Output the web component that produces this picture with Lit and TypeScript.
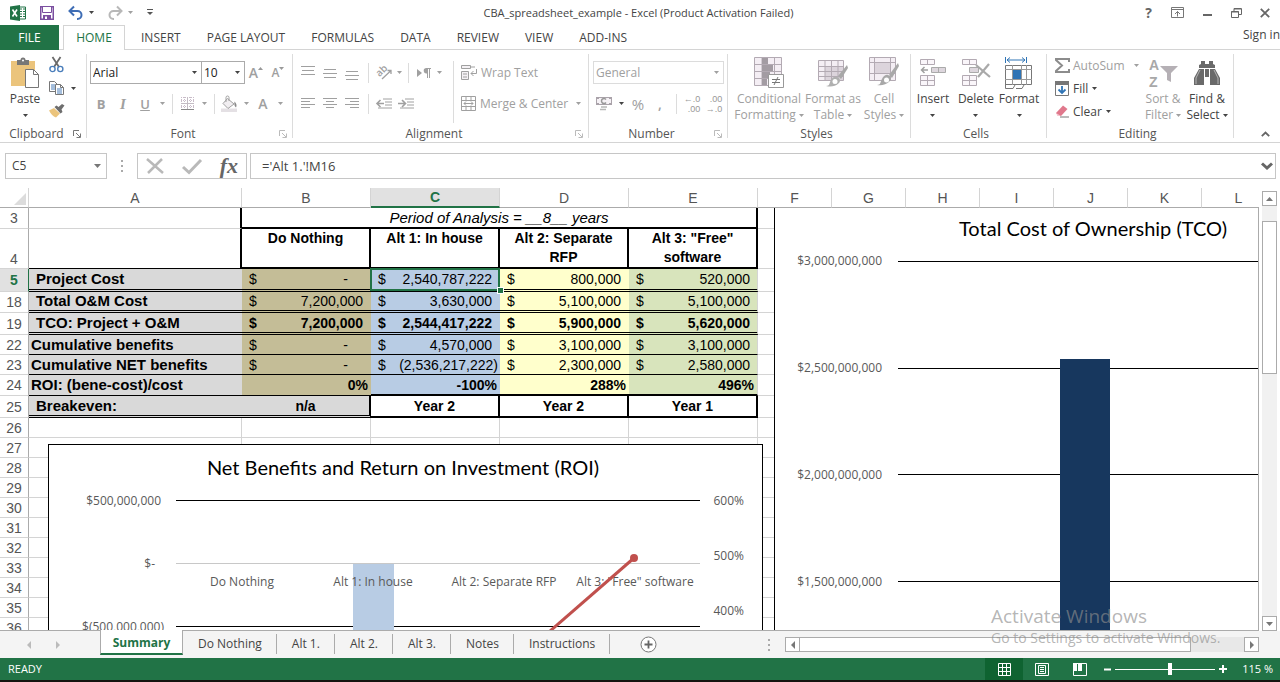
import { LitElement, html, svg, css, nothing, TemplateResult } from "lit";
import { customElement } from "lit/decorators.js";
import { classMap } from "lit/directives/class-map.js";

const icon = (w: number, h: number, body: unknown) =>
  html`<svg class="icon" width=${w} height=${h} viewBox="0 0 ${w} ${h}" aria-hidden="true">${body}</svg>`;

const caret = () => icon(5, 3, svg`<path d="M0 0h5L2.500 3z" fill="currentColor"/>`);

const lines = (rows: Array<[number, number, number]>) =>
  icon(14, 14, svg`${rows.map(([x, y, w]) => svg`<rect x=${x} y=${y} width=${w} height="1" fill="#a0a0a0"/>`)}`);

const launcher = (dim: boolean) =>
  icon(8, 8, svg`<path d="M.5 6V.5H6M3 3l4 4M7.500 3.500v4h-4" fill="none" stroke=${dim ? "#bbb" : "#777"}/>`);

const icons = {
  excel: icon(16, 16, svg`<path d="M9 2h6.500v12H9z" fill="#fff" stroke="#217346"/><path d="M10 4h2m1 0h2M10 6.500h2m1 0h2M10 9h2m1 0h2M10 11.500h2m1 0h2" stroke="#217346"/><path d="M0 1.500 10 0v16L0 14.500z" fill="#217346"/><path d="m2.500 4.500 4.500 7M7 4.500l-4.500 7" stroke="#fff" stroke-width="1.600"/>`),
  save: icon(14, 14, svg`<path d="M.75.75h12.500v12.500H.75z" fill="#fff" stroke="#7b4fa0" stroke-width="1.500"/><path d="M2.500 1v5.500h9V1" fill="#fff" stroke="#7b4fa0"/><path d="M3 9h8v4.500H3z" fill="#7b4fa0"/><path d="M5 10.500h2V13H5z" fill="#fff"/>`),
  undo: icon(16, 14, svg`<path d="M2 5h7.500a4 4 0 0 1 0 8H9" fill="none" stroke="#3e6db5" stroke-width="2"/><path d="M6 .5 1.500 5 6 9.500" fill="none" stroke="#3e6db5" stroke-width="2"/>`),
  redo: icon(16, 14, svg`<path d="M14 5H6.500a4 4 0 0 0 0 8H7" fill="none" stroke="#b8b8b8" stroke-width="2"/><path d="m10 .5 4.500 4.500L10 9.500" fill="none" stroke="#b8b8b8" stroke-width="2"/>`),
  customise: icon(6, 7, svg`<path d="M0 .5h6" stroke="#555"/><path d="M0 3h6L3 6z" fill="#555"/>`),
  help: html`<b class="help">?</b>`,
  ribbonOptions: icon(13, 11, svg`<path d="M.5.5h12v10H.5zM0 2.500h13M6.500 9.500v-5M4 7l2.500-2.500L9 7" fill="none" stroke="#777"/>`),
  minimize: icon(9, 10, svg`<path d="M0 7h9" stroke="#666" stroke-width="2"/>`),
  restore: icon(11, 10, svg`<path d="M.5 3.500h7v6h-7zM0 4h8M3 3V.5h7.500v6H8M3 1h7" fill="none" stroke="#666"/>`),
  close: icon(10, 10, svg`<path d="m.8.8 8.400 8.400M9.200.8.8 9.200" stroke="#666" stroke-width="1.800"/>`),
  paste: icon(28, 32, svg`<path d="M0 4h24v25H0z" fill="#ebc47c"/><path d="M6 3h3.500a2.500 2.500 0 0 1 5 0H18v5H6z" fill="#777"/><circle cx="12" cy="3.500" r="1" fill="#fff"/><path d="M14.500 12.500h8l5 5v13h-13z" fill="#fff" stroke="#777"/><path d="M22.500 12.500v5h5" fill="none" stroke="#777"/>`),
  cut: icon(15, 16, svg`<path d="M3.500 0 10 10M11.500 0 5 10" stroke="#6a6a6a" stroke-width="1.800"/><circle cx="3.500" cy="12" r="2.600" fill="none" stroke="#4a7ebb" stroke-width="1.400"/><circle cx="11.300" cy="12" r="2.600" fill="none" stroke="#4a7ebb" stroke-width="1.400"/>`),
  copy: icon(15, 14, svg`<path d="M.5.5h5l3 3v7h-8z" fill="#fff" stroke="#777"/><path d="M2 4h4M2 6h4M2 8h4" stroke="#4a7ebb"/><path d="M6.500 3.500h5l3 3v7h-8z" fill="#fff" stroke="#777"/><path d="M11.500 3.500v3h3" fill="none" stroke="#777"/><path d="M8 8h5M8 10h5M8 12h5" stroke="#4a7ebb"/>`),
  painter: icon(16, 14, svg`<path d="M0 6.500 5 4l6 5.500-4 4C4 12.500 2 10 0 6.500z" fill="#ebc47c"/><path d="m5.500 3 2-1.500 2 1.500L13 0l2.500 1.500-3 4 1 2.500-2 1.500z" fill="#6e6e6e"/>`),
  grow: html`<span class="glyph big">A</span>${icon(5, 12, svg`<path d="M0 3h5L2.500 0z" fill="#999"/>`)}`,
  shrink: html`<span class="glyph small">A</span>${icon(5, 12, svg`<path d="M0 0h5L2.500 3z" fill="#999"/>`)}`,
  borders: icon(13, 13, svg`<path d="M.5 0v12M3.500 0v12M6.500 0v12M9.500 0v12M12.500 0v12M0 .5h13M0 3.500h13M0 6.500h13M0 9.500h13" stroke="#c9bcc9" stroke-dasharray="1 1"/><path d="M0 6.500h13M6.500 0v12" stroke="#c4bcc4"/><path d="M0 12.500h13" stroke="#888"/>`),
  bucket: icon(17, 16, svg`<path d="M0 12.500h16V16H0z" fill="#e4e0e4"/><path d="m6.500 2.500 6.500 5.500-6 4.500-5-5z" fill="#f1eef1" stroke="#a0a0a0"/><path d="M5 6V1.500a1.500 1.500 0 0 1 3 0V5" fill="none" stroke="#a0a0a0"/><path d="M13.500 5.500c2 2 2.500 4 1.500 6-1.500-1-2-3-1.500-6z" fill="#8a8a8a"/>`),
  top: lines([[0, 0, 14], [1, 4, 12], [0, 8, 14]]),
  middle: lines([[1, 3, 12], [0, 7, 14], [1, 11, 12]]),
  bottom: lines([[1, 5, 12], [0, 9, 14], [1, 13, 12]]),
  left: lines([[0, 1, 14], [0, 4, 9], [0, 7, 14], [0, 10, 9]]),
  center: lines([[0, 1, 14], [3, 4, 8], [0, 7, 14], [3, 10, 8]]),
  right: lines([[0, 1, 14], [5, 4, 9], [0, 7, 14], [5, 10, 9]]),
  orientation: icon(17, 15, svg`<text x="1" y="10" transform="rotate(-45 5 8)" font-size="10" font-family="Open Sans" font-weight="600" fill="#a0a0a0">ab</text><path d="M6 14 15 5.500M11.500 5.500H15V9" fill="none" stroke="#a0a0a0" stroke-width="1.300"/>`),
  direction: icon(14, 10, svg`<path d="m0 1 5 4-5 4z" fill="#a0a0a0"/><path d="M9 5V0h5v1h-1v9h-1V1h-1v9h-1V5.500A2.500 2.500 0 0 1 9 0" fill="#a0a0a0"/>`),
  outdent: icon(16, 12, svg`<path d="M7 1h9M9 4h7M9 7h7M2 10h14" stroke="#a0a0a0"/><path d="M1 5.500h7M4.500 2 1 5.500 4.500 9" fill="none" stroke="#a0a0a0" stroke-width="1.600"/>`),
  indent: icon(16, 12, svg`<path d="M7 1h9M9 4h7M9 7h7M2 10h14" stroke="#a0a0a0"/><path d="M0 5.500h7M4 2l3.500 3.500L4 9" fill="none" stroke="#a0a0a0" stroke-width="1.600"/>`),
  wrap: icon(16, 15, svg`<path d="M.5.5h9v3h-9zM.5 6.500h7v8h-7z" fill="#f4f1f4" stroke="#a0a0a0"/><path d="M2 9h4M2 12h4M10 2h4M15.500 4v4.500H10M12.500 6 10 8.500l2.500 2.500" fill="none" stroke="#a0a0a0"/>`),
  merge: icon(15, 15, svg`<path d="M.5.5h14v14H.5zM0 4.500h15M0 10.500h15M5 .5v4M10 .5v4M5 10.500v4M10 10.500v4M3 7.500h9M5 5.500l-2 2 2 2M10 5.500l2 2-2 2" fill="none" stroke="#a0a0a0"/>`),
  currency: icon(17, 15, svg`<path d="M.5 1.500h15v7H.5z" fill="#f6f2f6" stroke="#aaa3aa"/><path d="M0 1h3v2H0zM13 1h3v2h-3zM0 7h3v2H0zM13 7h3v2h-3z" fill="#aaa3aa"/><path d="M10 3.500a2.500 2.500 0 1 0 0 3" fill="none" stroke="#999" stroke-width="1.500"/><path d="M5 11h6M4 13.500h6" stroke="#b8b8b8" stroke-width="1.500"/>`),
  decInc: html`<span class="decimals"><span>←.0</span><span>.00</span></span>`,
  decDec: html`<span class="decimals"><span>.00</span><span>→.0</span></span>`,
  conditional: icon(30, 31, svg`<path d="M.5.5h27v28H.5z" fill="#f4eef4" stroke="#b3aab3"/><path d="M0 7.500h28M0 14.500h28M0 21.500h28M8 0v29M20.500 0v29" stroke="#b3aab3"/><path d="M8 1h6v6H8zM8 8h11v6H8zM8 15h8v6H8zM8 22h5v6H8z" fill="#a39ca3"/><path d="M14.500 17.500h15v13h-15z" fill="#fff" stroke="#999"/><path d="M18 22.500h8M18 25.500h8M24 20l-4 8" stroke="#777"/>`),
  formatTable: icon(30, 31, svg`<path d="M.5 3.500h25v20H.5z" fill="#f4eef4" stroke="#b3aab3"/><path d="M7 9h18v14H7z" fill="#dcd4dc"/><path d="M0 9.500h26M0 14.500h26M0 19.500h26M7 3v20M13.500 3v20M20 3v20" stroke="#b3aab3"/><path d="m29 8-9 11 3 3 7-11z" fill="#a8a8a8"/><path d="M19 20c3 1 4 4 2 6-4 4-9 4-13 3 4 0 3-3 5-6 1-2 3-4 6-3z" fill="#b0b0b0"/><circle cx="17" cy="24.500" r="2.500" fill="#fff"/>`),
  cellStyles: icon(30, 31, svg`<path d="M.5.5h26v23H.5z" fill="#f4eef4" stroke="#b3aab3"/><path d="M6 6h15v10H6z" fill="#dcd4dc"/><path d="M0 5.500h27M0 16.500h27M5.500 0v24M21.500 0v24" stroke="#b3aab3"/><path d="m29 6-9 12 3 3 7-12z" fill="#a8a8a8"/><path d="M19 18c3 1 4 4 2 6-4 4-9 5-13 4 4 0 3-3 5-6 1-2 3-5 6-4z" fill="#a8a8a8"/><circle cx="17.500" cy="23" r="2.500" fill="#fff"/>`),
  insert: icon(28, 29, svg`<path d="M1.500 1.500h14v5h-14zM8.500 1v6M1.500 17.500h14v10h-14zM8.500 17v11M1 22.500h15" fill="#faf6fa" stroke="#b3aab3"/><path d="M12.500 9.500h14v5h-14zM19.500 9v6" fill="#ddd6dd" stroke="#aaa"/><path d="M3 12h6M5.500 9 2.500 12l3 3" fill="none" stroke="#a0a0a0" stroke-width="1.500"/>`),
  remove: icon(30, 29, svg`<path d="M1.500 1.500h14v5h-14zM8.500 1v6M1.500 17.500h14v10h-14zM8.500 17v11M1 22.500h15" fill="#faf6fa" stroke="#b3aab3"/><path d="M8.500 9.500h9v5h-9z" fill="#ddd6dd" stroke="#aaa"/><path d="m15 7 14 12M28 6 17 19" stroke="#a9a9a9" stroke-width="2.200"/>`),
  format: icon(30, 32, svg`<path d="M1.500 0v6M22.500 0v6M3 3h18M6 .5 3 3l3 2.500M18 .5 21 3l-3 2.500" fill="none" stroke="#2f74b5"/><path d="M1.500 8.500h26v19h-26z" fill="#fff" stroke="#777"/><path d="M8.500 8v20M17.500 8v20M22.500 8v20M1 12.500h27M1 22.500h27" fill="none" stroke="#999"/><path d="M9 13h8v9H9z" fill="#2f74b5"/><path d="M1.500 27v4.500H9l2-3.500M12 31.500h6l2-3.500" fill="none" stroke="#777"/>`),
  sigma: icon(14, 15, svg`<path d="M14 4V1H1v1l6 5.500-6 5.500v1h13v-3" fill="none" stroke="#8c8c8c" stroke-width="2"/>`),
  fill: icon(14, 15, svg`<path d="M.5.5h13v14H.5z" fill="#fff" stroke="#777"/><path d="M0 0h14v4H0z" fill="#777"/><path d="M7 5v7M3.500 8.500 7 12l3.500-3.500" fill="none" stroke="#2f74b5" stroke-width="1.800"/>`),
  clear: icon(14, 13, svg`<path d="M1 8 8 .5 12.500 4 6 11H3z" fill="#e0788c"/><path d="m1 8 5 3H3z" fill="#f7c8d0"/><path d="M5 12h9" stroke="#777"/>`),
  sort: icon(30, 32, svg`<g font-family="Liberation Sans" font-size="14" font-weight="700" fill="#a8a8a8"><text x="1" y="13">A</text><text x="1" y="30">Z</text></g><path d="M12 9h18l-7 7v9l-4-2v-7z" fill="#b5b0b5"/>`),
  find: icon(28, 26, svg`<path d="M8 1h4v3h4V1h4v3l2 1v3H6V5l2-1z" fill="#6a6a6a"/><path d="M6 9 1 18v7h10V9zM22 9l5 9v7H17V9z" fill="#6a6a6a"/><path d="M12 9h4v8h-4z" fill="#6a6a6a"/><path d="m7 10-4 8v6M21 10l4 8v6" fill="none" stroke="#b5b5b5"/>`),
  collapse: icon(9, 6, svg`<path d="m.8 5.200 3.700-3.700 3.700 3.700" fill="none" stroke="#666" stroke-width="1.800"/>`),
  cancel: icon(18, 16, svg`<path d="m1 1 16 14M16 1 2 15" stroke="#b9b9b9" stroke-width="2.500"/>`),
  enter: icon(20, 15, svg`<path d="m1 8 6 5.500L19 1" fill="none" stroke="#b9b9b9" stroke-width="3"/>`),
  expand: icon(12, 8, svg`<path d="m1 1.500 5 4.500 5-4.500" fill="none" stroke="#666" stroke-width="3"/>`),
  corner: icon(12, 12, svg`<path d="M12 0v12H0z" fill="#dcdcdc"/>`),
  up: icon(7, 4, svg`<path d="M0 4h7L3.500 0z" fill="#777"/>`),
  down: icon(7, 4, svg`<path d="M0 0h7L3.500 4z" fill="#777"/>`),
  prev: icon(4, 8, svg`<path d="M4 0v8L0 4z" fill="currentColor"/>`),
  next: icon(4, 8, svg`<path d="M0 0v8l4-4z" fill="currentColor"/>`),
  add: icon(17, 17, svg`<circle cx="8.500" cy="8.500" r="7.500" fill="#fff" stroke="#777"/><path d="M8.500 4.500v8M4.500 8.500h8" stroke="#666" stroke-width="1.800"/>`),
  dots: icon(2, 12, svg`<path d="M0 1h2M0 6h2M0 11h2" stroke="#aaa" stroke-width="2"/>`),
  normalView: icon(13, 13, svg`<path d="M.5.5h12v12H.5zM4.500 0v13M8.500 0v13M0 4.500h13M0 8.500h13" fill="none" stroke="#fff"/>`),
  layoutView: icon(14, 13, svg`<path d="M.5.5h13v12H.5zM3.500 2.500h7v8h-7zM5 4.500h4M5 6.500h4M5 8.500h4" fill="none" stroke="#fff"/>`),
  breakView: icon(14, 13, svg`<path d="M.5.5h13v12H.5z" fill="none" stroke="#fff"/><path d="M0 0h4v8H0zM5 0h4v8H5z" fill="#fff"/>`),
};

interface Row {
  n: string;
  kind: string;
  label?: string;
  indent?: boolean;
  values?: string[];
}

const ROWS: Row[] = [
  { n: "5", kind: "money double r5", label: "Project Cost", indent: true, values: ["-", "2,540,787,222", "800,000", "520,000"] },
  { n: "18", kind: "money double r18", label: "Total O&M Cost", indent: true, values: ["7,200,000", "3,630,000", "5,100,000", "5,100,000"] },
  { n: "19", kind: "money double r19 strong", label: "TCO: Project + O&M", indent: true, values: ["7,200,000", "2,544,417,222", "5,900,000", "5,620,000"] },
  { n: "22", kind: "money single", label: "Cumulative benefits", values: ["-", "4,570,000", "3,100,000", "3,100,000"] },
  { n: "23", kind: "money single", label: "Cumulative NET benefits", values: ["-", "(2,536,217,222)", "2,300,000", "2,580,000"] },
  { n: "24", kind: "percent single r24 strong", label: "ROI: (bene-cost)/cost", values: ["0%", "-100%", "288%", "496%"] },
  { n: "25", kind: "break strong", label: "Breakeven:", indent: true, values: ["n/a", "Year 2", "Year 2", "Year 1"] },
  ...["26", "27", "28", "29", "30", "31", "32", "33", "34", "35", "36"].map((n) => ({ n, kind: "plain" })),
];

const COLS = ["A", "B", "C", "D", "E", "F", "G", "H", "I", "J", "K", "L"];
const FILLS = ["tan", "blue", "yellow", "green"];

@customElement("app-root")
export class AppRoot extends LitElement {
  static styles = css`
    :host { display: flex; flex-direction: column; height: 100vh; overflow: hidden; background: #fff; color: #444;
      font: 12px/16px "Open Sans", "Noto Sans", sans-serif; }
    * { box-sizing: border-box; }
    button, select, input { font: inherit; color: inherit; background: none; border: 0; padding: 0; margin: 0; border-radius: 0; }
    button { display: inline-flex; align-items: center; justify-content: center; white-space: nowrap; }
    .icon { display: block; flex: none; overflow: visible; }
    .dim { color: #a0a0a0; }
    .help { font-size: 14px; line-height: 20px; color: #666; }

    .titlebar { display: flex; height: 25px; align-items: center; justify-content: space-between; flex: none; }
    .quick { display: flex; align-items: center; width: 153px; padding-left: 10px; justify-content: space-between; }
    .quick .pair { display: flex; align-items: center; gap: 5px; }
    .title { margin: 0; padding-right: 10px; font-size: 11px; font-weight: 400; flex: 1; text-align: center; }
    .window { display: flex; align-items: center; width: 146px; }
    .window button { flex: 1; height: 22px; }

    .tabs { display: flex; height: 25px; flex: none; border-bottom: 1px solid #d4d4d4; }
    .tabs button { padding: 0 13px; height: 25px; white-space: nowrap; }
    .tabs .file { width: 59px; background: #217346; color: #fff; }
    .tabs .home { width: 62px; margin: 0 3px 0 4px; color: #217346; background: #fff; border: 1px solid #d4d4d4; border-bottom: 0; }
    .tabs .signin { margin-left: auto; padding: 0; height: 20px; }

    .ribbon { display: flex; height: 93px; flex: none; border-bottom: 1px solid #d4d4d4; padding: 4px 0; }
    .group { display: flex; flex-direction: column; flex: none; border-right: 1px solid #dcdcdc; }
    .body { flex: 1; display: flex; }
    .caption { display: flex; height: 16px; align-items: center; padding-right: 5px; margin-bottom: -4px; color: #555; }
    .caption span { flex: 1; text-align: center; }
    .clipboard { width: 87px; }
    .font { width: 206px; }
    .alignment { width: 296px; }
    .number { width: 139px; }
    .styles { width: 183px; }
    .cells { width: 136px; }
    .editing { width: 187px; }
    .stack { flex-direction: column; padding: 7px 0 0 3px; gap: 8px; }
    .line { display: flex; align-items: center; height: 23px; }
    .b22 { width: 22px; height: 22px; }
    .b12 { width: 12px; height: 22px; }
    .b8 { width: 8px; height: 22px; }
    .sep { width: 10px; height: 20px; display: flex; justify-content: center; }
    .font .sep { width: 8px; }
    .sep::before { content: ""; width: 1px; background: #dcdcdc; }
    .glyph { color: #a0a0a0; font-weight: 600; }
    .glyph.big { font-size: 14px; }
    .glyph.small { font-size: 12px; }
    .glyph.bd { font-weight: 700; font-size: 13px; }
    .glyph.it { font-family: "Liberation Serif", serif; font-style: italic; font-size: 15px; }
    .glyph.un { text-decoration: underline; font-size: 13px; }
    .glyph.pct { font-size: 15px; font-weight: 400; }
    .decimals { display: flex; flex-direction: column; align-items: flex-end; font: 9px/10px "Liberation Sans", Arial, sans-serif; color: #999; }
    .combo { display: grid; height: 23px; border: 1px solid #ababab; align-items: center; }
    .combo select { grid-area: 1 / 1; appearance: none; width: 100%; height: 21px; padding-left: 2px; color: #222; }
    .combo .icon { grid-area: 1 / 1; justify-self: end; margin-right: 4px; pointer-events: none; }
    .combo + .combo { margin-left: -1px; }
    .combo.off { border-color: #dcdcdc; }
    .combo.off select { color: #a0a0a0; }
    .family { width: 112px; }
    .size { width: 44px; }
    .format { width: 131px; }
    .number .stack { padding-left: 4px; }
    .paste { width: 42px; margin: 0 3px 0 4px; }
    .tall { display: flex; flex-direction: column; align-items: center; justify-content: flex-start; }
    .tall .pic { height: 37px; display: flex; align-items: center; justify-content: center; }
    .tall .txt { line-height: 16px; text-align: center; display: flex; flex-direction: column; align-items: center; }
    .tall .txt .row { display: flex; align-items: center; gap: 3px; height: 16px; }
    .mini { display: flex; flex-direction: column; gap: 1px; }
    .mini button { height: 22px; justify-content: flex-start; gap: 7px; }
    .side { flex: 1; border-left: 1px solid #dcdcdc; height: 62px; display: flex; flex-direction: column; gap: 8px; padding: 0 0 0 7px; }
    .side button { height: 23px; gap: 4px; align-self: flex-start; }
    .side .merge { gap: 4px; }
    .side .after { padding-left: 4px; }
    .aligns { padding: 7px 0 0 4px; }
    .aligns .left { width: 156px; display: flex; flex-direction: column; gap: 8px; }
    .styles .body { padding-left: 5px; }
    .w42 { width: 42px; }
    .w44 { width: 44px; }
    .w46 { width: 46px; }
    .w56 { width: 56px; }
    .w72 { width: 72px; }
    .edits { display: flex; flex-direction: column; width: 94px; padding-left: 8px; }
    .edits button { height: 23px; gap: 4px; align-self: flex-start; }
    .edits .auto { align-self: stretch; justify-content: flex-start; padding-right: 2px; }
    .edits .auto .icon:last-child { margin-left: auto; }
    .tail { flex: 1; display: flex; justify-content: flex-end; align-items: flex-end; padding: 0 10px 1px 0; }

    .formula { display: flex; flex: none; height: 45px; padding: 10px 4px 9px 5px; font-size: 12px; }
    .formula .box { border: 1px solid #c6c6c6; height: 26px; display: flex; align-items: center; }
    .namebox { width: 102px; padding: 0 5px 0 6px; }
    .namebox input { flex: 1; min-width: 0; }
    .grip { width: 30px; display: flex; align-items: center; justify-content: center; }
    .tools { width: 110px; padding: 0 8px; justify-content: space-between; margin-right: 3px; }
    .fx { font: italic 600 22px/24px "Liberation Serif", serif; color: #666; }
    .entry { flex: 1; padding: 0 2px 0 11px; }
    .entry input { flex: 1; font-size: 13px; }

    .work { display: flex; flex: 1; min-height: 0; }
    .sheet { position: relative; flex: 1; min-width: 0; overflow: hidden; border-bottom: 1px solid #ababab; }
    table { border-collapse: separate; border-spacing: 0; table-layout: fixed; width: 1276px;
      font: 14px/18px "Liberation Sans", Arial, sans-serif; color: #000; }
    .c0 { width: 29px; }
    .cA { width: 213px; }
    .cB { width: 129px; }
    .cF { width: 74px; }
    th, td { padding: 0; overflow: hidden; white-space: nowrap; border: 0 solid #d4d4d4; border-width: 0 1px 1px 0; height: 20px; vertical-align: middle; }
    thead th { font-weight: 400; color: #555; border-bottom-color: #ababab; }
    thead .sel { background: #e1e1e1; color: #217346; font-weight: 700; border-bottom: 2px solid #217346; }
    thead .corner .icon { margin: 2px 0 0 14px; }
    tbody th { font-weight: 400; color: #555; border-right-color: #ababab; }
    tbody th.sel { background: #e1e1e1; color: #217346; font-weight: 700; border-right-color: #217346; }
    .period td, .period th { height: 21px; }
    .heads td, .heads th { height: 40px; vertical-align: bottom; }
    .period .edge, .heads .edge { border-right: 2px solid #000; }
    .period .span { text-align: center; font-style: italic; font-size: 15px; border-right: 2px solid #000; border-bottom: 2px solid #000; }
    .heads .head { vertical-align: top; text-align: center; font-weight: 700; white-space: normal; line-height: 19px; border-right: 2px solid #000; border-bottom: 2px solid #000; padding: 0 10px; }
    .heads .edge { border-bottom-color: #000; }
    .label { background: #d9d9d9; font-weight: 700; font-size: 15px; border-right: 0; padding-left: 2px; }
    .label.indent { padding-left: 7px; }
    .tan { background: #c4bd97; } .blue { background: #b8cce4; } .yellow { background: #ffffcc; } .green { background: #d8e4bc; }
    .tan, .blue, .yellow, .green { border-right: 0; }
    .green { border-right: 1px solid #d4d4d4; }
    .strong td { font-weight: 700; }
    .double .d { border-bottom: 3px double #000; }
    .single .d { border-bottom: 1px solid #000; }
    .r5 > * { height: 23px; } .r18 > * { height: 21px; } .r19 > *, .break > * { height: 22px; } .r24 > * { height: 21px; }
    .amount { display: flex; justify-content: space-between; padding: 0 8px 0 7px; }
    .green .amount { padding-right: 7px; }
    .amount.neg { padding-right: 2px; }
    .amount.zero { padding-right: 23px; }
    .percent .v { text-align: right; padding-right: 3px; }
    .r24 .blue, .r24 .yellow, .r24 .green { border-bottom: 2px solid #000; }
    .break .label { border-bottom: 3px double #000; }
    .break .v { text-align: center; background: #fff; border: 0 solid #000; border-width: 0 2px 2px 0; }
    .break .tan { background: #d9d9d9; border-bottom: 3px double #000; }
    .active { position: relative; z-index: 1; overflow: visible; }
    .active::after { content: ""; position: absolute; inset: -1px 0 -2px -1px; border: 2px solid #217346; pointer-events: none; }
    .active::before { content: ""; position: absolute; right: -3px; bottom: -4px; width: 5px; height: 5px; background: #217346; outline: 1px solid #fff; z-index: 1; }

    .chart { position: absolute; z-index: 2; margin: 0; overflow: hidden; background: #fff; }
    .chart svg { display: block; }
    .roi { left: 48px; top: 256px; width: 715px; bottom: 0; border: 1px solid #000; border-bottom: 0; }
    .tco { left: 774px; top: 20px; right: 0; bottom: 0; border-left: 1px solid #000; border-right: 1px solid #ababab; }
    .ct { font: 20px Lato, sans-serif; fill: #000; text-anchor: middle; }
    .cl { font-size: 12px; fill: #595959; }
    .mid { text-anchor: middle; }
    .end { text-anchor: end; }

    .vscroll { width: 21px; flex: none; padding: 3px 3px 0 3px; display: flex; flex-direction: column; }
    .vscroll button, .hscroll button { width: 15px; height: 15px; border: 1px solid #ababab; background: #fff; flex: none; color: #777; }
    .vtrack { flex: 1; background: #f1f1f1; padding-top: 15px; }
    .vthumb { height: 153px; border: 1px solid #ababab; background: #fff; }

    .bottom { display: flex; height: 27px; flex: none; background: #f4f4f4; align-items: center; }
    .nav { display: flex; width: 100px; padding-left: 27px; gap: 25px; color: #bbb; flex: none; }
    .sheets { display: flex; align-self: stretch; margin-top: -1px; padding-bottom: 3px; }
    .sheets button { padding: 2px 15px 0; display: flex; position: relative; }
    .sheets button::after { content: ""; width: 1px; height: 20px; background: #ababab; position: absolute; right: 0; top: 4px; }
    .sheets .cur { width: 83px; padding: 2px 0 0; background: #fff; color: #217346; font-weight: 700; border: 1px solid #ababab; border-width: 0 1px 2px 1px; border-bottom-color: #217346; }
    .sheets .cur::after { display: none; }
    .addbtn { margin-left: 30px; }
    .bottom .handle { margin-left: auto; }
    .hscroll { display: flex; width: 37%; margin: 0 21px 0 15px; }
    .htrack { flex: 1; background: #e8e8e8; }
    .hthumb { width: 88%; height: 15px; border: 1px solid #ababab; border-left: 0; background: #fff; }

    .status { display: flex; height: 22px; flex: none; background: #217346; color: #fff; align-items: center; font-size: 11px; padding: 0 7px 0 8px; }
    .views { display: flex; margin-left: auto; align-self: stretch; }
    .views button { width: 38px; }
    .views .on { background: #0f6331; }
    .zoom { display: flex; align-items: center; gap: 3px; margin-left: 4px; }
    .zoom button { width: 9px; height: 16px; }
    .zoom input { appearance: none; width: 100px; height: 12px; }
    .zoom input::-webkit-slider-runnable-track { height: 12px; background: linear-gradient(#fff, #fff) center / 100% 1px no-repeat; }
    .zoom input::-webkit-slider-thumb { appearance: none; width: 4px; height: 12px; background: #fff; }
    .zoom output { width: 43px; text-align: right; white-space: nowrap; }
    .under { height: 2px; background: #14140f; flex: none; }

    .watermark { position: absolute; z-index: 3; left: 991px; bottom: 34px; color: rgba(140, 140, 140, 0.65); pointer-events: none; white-space: nowrap; }
    .watermark p { margin: 0; }
    .w1 { font-size: 19px; line-height: 24px; }
    .w2 { font-size: 14px; line-height: 20px; }
  `;

  private ib(label: string, body: unknown, cls = "b22") {
    return html`<button class=${cls} aria-label=${label}>${body}</button>`;
  }

  private drop(label: string, dim = true, cls = "b12") {
    return html`<button class="${cls} ${dim ? "dim" : ""}" aria-label="${label} options">${caret()}</button>`;
  }

  private tall(pic: TemplateResult, first: string, second: string, cls: string) {
    return html`<button class="tall ${cls}">
      <span class="pic">${pic}</span>
      <span class="txt"><span>${first}</span><span class="row">${second}${caret()}</span></span>
    </button>`;
  }

  private caption(text: string, launch: "none" | "on" | "dim" = "none") {
    return html`<div class="caption"><span>${text}</span>${launch === "none" ? nothing : this.ib(`${text} settings`, launcher(launch === "dim"), "")}</div>`;
  }

  private renderTitle() {
    return html`<header class="titlebar">
      <div class="quick">
        ${icons.excel}${this.ib("Save", icons.save, "")}
        <span class="pair">${this.ib("Undo", icons.undo, "")}${this.drop("Undo", false, "")}</span>
        <span class="pair dim">${this.ib("Redo", icons.redo, "")}${this.drop("Redo", true, "")}</span>
        ${this.ib("Customize toolbar", icons.customise, "")}
      </div>
      <h1 class="title">CBA_spreadsheet_example - Excel (Product Activation Failed)</h1>
      <div class="window">
        ${this.ib("Help", icons.help, "")}${this.ib("Ribbon options", icons.ribbonOptions, "")}${this.ib("Minimize", icons.minimize, "")}${this.ib("Restore", icons.restore, "")}${this.ib("Close", icons.close, "")}
      </div>
    </header>
    <nav class="tabs">
      <button class="file">FILE</button><button class="home">HOME</button>
      ${["INSERT", "PAGE LAYOUT", "FORMULAS", "DATA", "REVIEW", "VIEW", "ADD-INS"].map((t) => html`<button>${t}</button>`)}
      <button class="signin">Sign in</button>
    </nav>`;
  }

  private renderRibbon() {
    return html`<section class="ribbon">
      <div class="group clipboard">
        <div class="body">
          ${this.tall(icons.paste, "Paste", "", "paste")}
          <div class="mini">
            ${this.ib("Cut", icons.cut, "")}
            <button aria-label="Copy">${icons.copy}${caret()}</button>
            ${this.ib("Format painter", icons.painter, "")}
          </div>
        </div>
        ${this.caption("Clipboard", "on")}
      </div>
      <div class="group font">
        <div class="body stack">
          <div class="line">
            <span class="combo family"><select aria-label="Font"><option>Arial</option></select>${caret()}</span>
            <span class="combo size"><select aria-label="Font size"><option>10</option></select>${caret()}</span>
            ${this.ib("Increase font size", icons.grow)}${this.ib("Decrease font size", icons.shrink)}
          </div>
          <div class="line">
            ${this.ib("Bold", html`<span class="glyph bd">B</span>`)}${this.ib("Italic", html`<span class="glyph it">I</span>`)}${this.ib("Underline", html`<span class="glyph un">U</span>`)}${this.drop("Underline")}
            <span class="sep"></span>${this.ib("Borders", icons.borders)}${this.drop("Borders")}
            <span class="sep"></span>${this.ib("Fill color", icons.bucket)}${this.drop("Fill color")}${this.ib("Font color", html`<span class="glyph big">A</span>`)}${this.drop("Font color")}
          </div>
        </div>
        ${this.caption("Font", "dim")}
      </div>
      <div class="group alignment">
        <div class="body aligns">
          <div class="left">
            <div class="line">
              ${this.ib("Top align", icons.top)}${this.ib("Middle align", icons.middle)}${this.ib("Bottom align", icons.bottom)}
              <span class="sep"></span>${this.ib("Orientation", icons.orientation)}${this.drop("Orientation", true, "b8")}
              <span class="sep"></span>${this.ib("Text direction", icons.direction)}${this.drop("Text direction", true, "b8")}
            </div>
            <div class="line">
              ${this.ib("Align left", icons.left)}${this.ib("Center", icons.center)}${this.ib("Align right", icons.right)}
              <span class="sep"></span>${this.ib("Decrease indent", icons.outdent)}${this.ib("Increase indent", icons.indent)}
            </div>
          </div>
          <div class="side dim">
            <button>${icons.wrap}Wrap Text</button>
            <button class="merge">${icons.merge}Merge &amp; Center<span class="after">${caret()}</span></button>
          </div>
        </div>
        ${this.caption("Alignment", "dim")}
      </div>
      <div class="group number">
        <div class="body stack">
          <span class="combo off format dim"><select aria-label="Number format"><option>General</option></select>${caret()}</span>
          <div class="line">
            ${this.ib("Currency", icons.currency)}${this.drop("Currency", false)}${this.ib("Percent", html`<span class="glyph pct">%</span>`)}${this.ib("Comma style", html`<span class="glyph big">,</span>`)}
            <span class="sep"></span>${this.ib("Increase decimal", icons.decInc)}${this.ib("Decrease decimal", icons.decDec)}
          </div>
        </div>
        ${this.caption("Number", "dim")}
      </div>
      <div class="group styles">
        <div class="body dim">
          ${this.tall(icons.conditional, "Conditional", "Formatting", "w72")}
          ${this.tall(icons.formatTable, "Format as", "Table", "w56")}
          ${this.tall(icons.cellStyles, "Cell", "Styles", "w46")}
        </div>
        ${this.caption("Styles")}
      </div>
      <div class="group cells">
        <div class="body">
          ${this.tall(icons.insert, "Insert", "", "w44")}${this.tall(icons.remove, "Delete", "", "w42")}${this.tall(icons.format, "Format", "", "w44")}
        </div>
        ${this.caption("Cells")}
      </div>
      <div class="group editing">
        <div class="body">
          <div class="edits">
            <button class="auto dim">${icons.sigma}AutoSum ${caret()}</button>
            <button>${icons.fill}Fill ${caret()}</button>
            <button>${icons.clear}Clear ${caret()}</button>
          </div>
          ${this.tall(icons.sort, "Sort &", "Filter", "w44 dim")}${this.tall(icons.find, "Find &", "Select", "w44")}
        </div>
        ${this.caption("Editing")}
      </div>
      <div class="tail">${this.ib("Collapse the ribbon", icons.collapse, "")}</div>
    </section>`;
  }

  private renderCell(row: Row, i: number) {
    const v = row.values![i];
    const cls = { v: true, d: true, [FILLS[i]]: true, active: row.n === "5" && i === 1 };
    if (!row.kind.includes("money")) return html`<td class=${classMap(cls)}>${v}</td>`;
    return html`<td class=${classMap(cls)}>
      <span class=${classMap({ amount: true, neg: v[0] === "(", zero: v === "-" })}><span>$</span><span>${v}</span></span>
    </td>`;
  }

  private renderSheet() {
    const rest = COLS.slice(5).map(() => html`<td></td>`);
    return html`<table>
      <colgroup><col class="c0"><col class="cA">${[1, 2, 3, 4].map(() => html`<col class="cB">`)}${COLS.slice(5).map(() => html`<col class="cF">`)}</colgroup>
      <thead><tr><th class="corner">${icons.corner}</th>${COLS.map((c) => html`<th scope="col" class=${c === "C" ? "sel" : ""}>${c}</th>`)}</tr></thead>
      <tbody>
        <tr class="period"><th scope="row">3</th><td class="edge"></td><td class="span" colspan="4">Period of Analysis = __8__ years</td>${rest}</tr>
        <tr class="heads"><th scope="row">4</th><td class="edge"></td>
          ${["Do Nothing", "Alt 1: In house", "Alt 2: Separate RFP", 'Alt 3: "Free" software'].map((h) => html`<td class="head">${h}</td>`)}${rest}</tr>
        ${ROWS.map((r) => html`<tr class=${r.kind}>
          <th scope="row" class=${r.n === "5" ? "sel" : ""}>${r.n}</th>
          ${r.values
            ? html`<td class="label d ${r.indent ? "indent" : ""}">${r.label}</td>${r.values.map((_, i) => this.renderCell(r, i))}`
            : COLS.slice(0, 5).map(() => html`<td></td>`)}${rest}</tr>`)}
      </tbody>
    </table>`;
  }

  private renderCharts() {
    return html`<figure class="chart roi">
      <svg width="713" height="240" viewBox="49 445 713 240" role="img" aria-label="Net Benefits and Return on Investment">
        <text class="ct" x="403" y="475">Net Benefits and Return on Investment (ROI)</text>
        <path d="M176 500.500h524M176 626.500h524" stroke="#000"/><path d="M176 563.500h524" stroke="#c8c8c8"/>
        <rect x="353" y="564" width="41" height="200" fill="#b8cce4"/>
        <g class="cl end"><text x="161" y="505">$500,000,000</text><text x="155" y="568">$-</text><text x="164" y="631">$(500,000,000)</text></g>
        <g class="cl mid"><text x="242" y="586">Do Nothing</text><text x="373" y="586">Alt 1: In house</text><text x="504" y="586">Alt 2: Separate RFP</text><text x="635" y="586">Alt 3: "Free" software</text></g>
        <g class="cl end"><text x="744" y="505">600%</text><text x="744" y="560">500%</text><text x="744" y="615">400%</text></g>
        <path d="M634 558 503 672" stroke="#c0504d" stroke-width="3"/><circle cx="634" cy="558" r="4" fill="#c0504d"/>
      </svg></figure>
    <figure class="chart tco">
      <svg width="483" height="700" viewBox="775 208 483 700" role="img" aria-label="Total Cost of Ownership">
        <text class="ct" x="1093" y="236">Total Cost of Ownership (TCO)</text>
        <path d="M898 261.500h600M898 368.500h600M898 474.500h600M898 581.500h600" stroke="#000"/>
        <rect x="1060" y="359" width="50" height="600" fill="#17375e"/>
        <g class="cl end"><text x="882" y="265">$3,000,000,000</text><text x="882" y="372">$2,500,000,000</text><text x="882" y="479">$2,000,000,000</text><text x="882" y="586">$1,500,000,000</text></g>
      </svg></figure>`;
  }

  render() {
    return html`${this.renderTitle()}${this.renderRibbon()}
      <section class="formula">
        <span class="box namebox"><input aria-label="Name box" value="C5">${icons.down}</span>
        <span class="grip">${icons.dots}</span>
        <span class="box tools">${this.ib("Cancel", icons.cancel, "")}${this.ib("Enter", icons.enter, "")}${this.ib("Insert function", html`<span class="fx">fx</span>`, "")}</span>
        <span class="box entry"><input aria-label="Formula" value="='Alt 1.'!M16">${this.ib("Expand formula bar", icons.expand, "")}</span>
      </section>
      <main class="work">
        <div class="sheet">${this.renderSheet()}${this.renderCharts()}</div>
        <div class="vscroll">${this.ib("Scroll up", icons.up, "")}<div class="vtrack"><div class="vthumb"></div></div>${this.ib("Scroll down", icons.down, "")}</div>
      </main>
      <section class="bottom">
        <div class="nav">${this.ib("Previous sheet", icons.prev, "")}${this.ib("Next sheet", icons.next, "")}</div>
        <div class="sheets"><button class="cur">Summary</button>${["Do Nothing", "Alt 1.", "Alt 2.", "Alt 3.", "Notes", "Instructions"].map((s) => html`<button>${s}</button>`)}</div>
        ${this.ib("New sheet", icons.add, "addbtn")}
        <span class="handle">${icons.dots}</span>
        <div class="hscroll">${this.ib("Scroll left", icons.prev, "")}<div class="htrack"><div class="hthumb"></div></div>${this.ib("Scroll right", icons.next, "")}</div>
      </section>
      <footer class="status">
        <span>READY</span>
        <div class="views">${this.ib("Normal view", icons.normalView, "on")}${this.ib("Page layout view", icons.layoutView, "")}${this.ib("Page break preview", icons.breakView, "")}</div>
        <div class="zoom">
          ${this.ib("Zoom out", icon(7, 7, svg`<path d="M0 3.500h7" stroke="#fff" stroke-width="2"/>`), "")}
          <input type="range" aria-label="Zoom" min="10" max="200" value="115">
          ${this.ib("Zoom in", icon(8, 8, svg`<path d="M0 4h8M4 0v8" stroke="#fff" stroke-width="2"/>`), "")}
          <output>115 %</output>
        </div>
      </footer>
      <div class="under"></div>
      <div class="watermark"><p class="w1">Activate Windows</p><p class="w2">Go to Settings to activate Windows.</p></div>`;
  }
}
